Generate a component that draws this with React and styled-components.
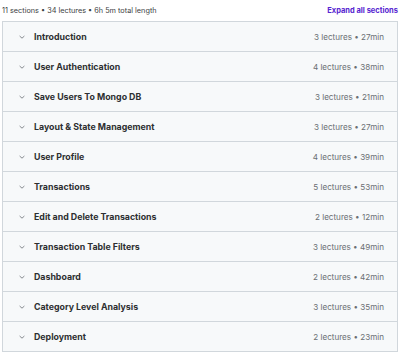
import React from "react";
import styled, { createGlobalStyle } from "styled-components";

const Global = createGlobalStyle`
  html, body { margin: 0; padding: 0; background: #ffffff; }
  body { font-family: Inter, "Noto Sans", sans-serif; color: #2d2f31; }
`;

const Page = styled.div`
  width: 400px;
  padding: 0 2px;
  box-sizing: border-box;
`;

const Header = styled.div`
  display: flex;
  align-items: center;
  justify-content: space-between;
  height: 21px;
`;

const Summary = styled.span`
  font-size: 7.3px;
  color: #3e4143;
`;

const ExpandLink = styled.button`
  border: 0;
  background: none;
  padding: 0;
  font-family: inherit;
  font-size: 7.5px;
  font-weight: 700;
  color: #5624d0;
  cursor: pointer;
`;

const Panel = styled.div`
  border: 1px solid #d1d7dc;
  border-bottom: 0;
`;

const Row = styled.div`
  display: flex;
  align-items: center;
  height: 29px;
  padding: 0 13px 0 16px;
  background: #f7f9fa;
  border-bottom: 1px solid #d1d7dc;
`;

const Chevron = styled.svg`
  width: 6px;
  height: 6px;
  flex: none;
  margin-right: 9px;
`;

const Title = styled.span`
  flex: 1;
  font-size: 8.8px;
  font-weight: 700;
  color: #2d2f31;
`;

const Meta = styled.span`
  font-size: 8.1px;
  color: #6a6f73;
`;

const sections = [
  ["Introduction", 3, 27],
  ["User Authentication", 4, 38],
  ["Save Users To Mongo DB", 3, 21],
  ["Layout & State Management", 3, 27],
  ["User Profile", 4, 39],
  ["Transactions", 5, 53],
  ["Edit and Delete Transactions", 2, 12],
  ["Transaction Table Filters", 3, 49],
  ["Dashboard", 2, 42],
  ["Category Level Analysis", 3, 35],
  ["Deployment", 2, 23],
];

export default function App() {
  return (
    <Page>
      <Global />
      <Header>
        <Summary>11 sections • 34 lectures • 6h 5m total length</Summary>
        <ExpandLink>Expand all sections</ExpandLink>
      </Header>
      <Panel>
        {sections.map(([t, l, m]) => (
          <Row key={t}>
            <Chevron viewBox="0 0 6 6">
              <path d="M0.6 2 L3 4.2 L5.4 2" fill="none" stroke="#6a6f73" strokeWidth="0.8" />
            </Chevron>
            <Title>{t}</Title>
            <Meta>{l} lectures • {m}min</Meta>
          </Row>
        ))}
      </Panel>
    </Page>
  );
}
